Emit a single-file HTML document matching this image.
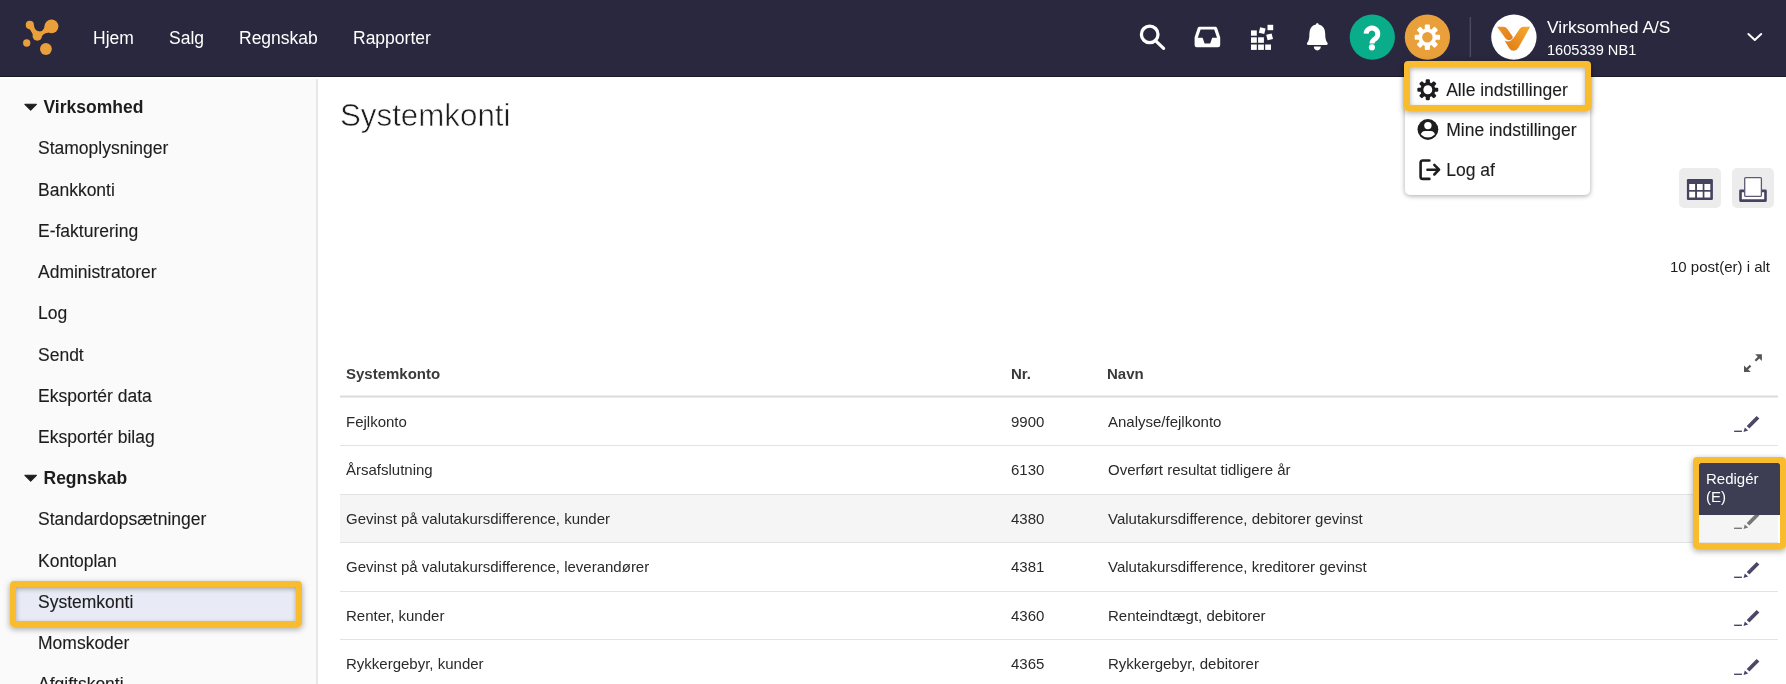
<!DOCTYPE html>
<html lang="da">
<head>
<meta charset="utf-8">
<title>Systemkonti</title>
<style>
*{box-sizing:border-box;margin:0;padding:0}
html,body{width:1786px;height:684px;overflow:hidden;background:#fff}
body{font-family:"Liberation Sans",sans-serif;color:#1d1d1f;position:relative}
.abs{position:absolute}
/* NAVBAR */
#nav{position:absolute;left:0;top:0;width:1786px;height:77px;background:#2a283e;border-bottom:1px solid #1b1930}
#nav .mi{position:absolute;top:28px;color:#fff;font-size:17.5px;line-height:20px;white-space:nowrap}
/* SIDEBAR */
#side{position:absolute;left:0;top:79px;width:318px;height:605px;background:#fafafa;border-right:2px solid #e7e7e9}
.sh{position:absolute;left:43.5px;font-weight:bold;font-size:17.5px;line-height:20px;color:#1d1d1f;white-space:nowrap}
.si{position:absolute;left:38px;-webkit-text-stroke:0.12px #1d1d1f;font-size:17.5px;line-height:20px;color:#1d1d1f;white-space:nowrap}
.tri{position:absolute;left:24px;width:0;height:0;border-left:7px solid transparent;border-right:7px solid transparent;border-top:8px solid #1d1d1f}
/* MAIN */
#title{position:absolute;left:340px;top:96px;font-size:31.3px;line-height:40px;color:#1d1d1f;white-space:nowrap;-webkit-text-stroke:0.6px #fff}
.th{position:absolute;top:365px;font-weight:bold;font-size:15px;line-height:18px;color:#3a3a3c;white-space:nowrap}
.row{position:absolute;left:340px;width:1438px;height:48.5px}
.ln{position:absolute;left:340px;width:1438px;height:1px;background:#e3e3e3}
.row span{position:absolute;top:15.7px;font-size:15px;line-height:18px;color:#2a2a2c;white-space:nowrap}
.c1{left:6px}.c2{left:671px}.c3{left:768px}

.hl{position:absolute;border:6px solid #f8bc2e;border-radius:4px;box-shadow:0 2px 6px rgba(0,0,0,.35), inset 0 2px 5px rgba(0,0,0,.30)}
#dd{position:absolute;left:1405px;top:66px;width:185px;height:129px;background:#fff;border-radius:5px;box-shadow:0 1px 5px rgba(0,0,0,.35)}
.ddt{position:absolute;left:1446.2px;-webkit-text-stroke:0.12px #1d1d1f;font-size:17.5px;line-height:20px;color:#1d1d1f;white-space:nowrap}
.btn{position:absolute;top:168px;width:42px;height:40px;background:#ececec;border-radius:5px}
#cnt{position:absolute;right:16px;top:258px;font-size:15px;line-height:18px;color:#1d1d1f;white-space:nowrap}
.ed{position:absolute;left:1394px;top:19px}
#tip{position:absolute;left:1699px;top:463px;width:81px;height:52px;background:#3d3e54;border-radius:2px 2px 0 0;color:#fff;font-size:15px;line-height:18px;padding:7px 0 0 7px}
</style>
</head>
<body>
<div id="wrap" style="position:absolute;left:0;top:0;width:1786px;height:684px;will-change:transform">
<div id="nav">
  <svg class="abs" style="left:20px;top:16px" width="44" height="44" viewBox="20 16 44 44">
    <g fill="#e9a03b" stroke="none">
      <circle cx="29.8" cy="24.9" r="4.05"/>
      <circle cx="51.5" cy="26.3" r="6.9"/>
      <circle cx="37.3" cy="35.9" r="4.75"/>
      <circle cx="26.7" cy="43" r="3.65"/>
      <circle cx="45.9" cy="49" r="5.9"/>
    </g>
    <path d="M27.1 27.7 Q31 29.5 32.6 34.3 L41.75 36.5 Q44.2 32.7 48.6 32.8 L44.9 25.5 C43.8 30.4 41.6 31.5 38.95 31.5 C36.3 31.2 34.1 29 33.9 25.1 Z" fill="#e9a03b"/>
  </svg>
  <div class="mi" style="left:93px">Hjem</div>
  <div class="mi" style="left:169px">Salg</div>
  <div class="mi" style="left:239px">Regnskab</div>
  <div class="mi" style="left:353px">Rapporter</div>

  <svg class="abs" style="left:1130px;top:0" width="656" height="77" viewBox="1130 0 656 77">
    <!-- search -->
    <circle cx="1149.7" cy="34.4" r="8.3" fill="none" stroke="#fff" stroke-width="3.3"/>
    <path d="M1156 41.2 L1163.6 48.4" stroke="#fff" stroke-width="3.2" stroke-linecap="round" fill="none"/>
    <!-- inbox -->
    <path d="M1199.6 26.8 H1215.2 Q1216.6 26.8 1217.1 28.1 L1220.2 37.2 V45 Q1220.2 47.2 1218 47.2 H1196.8 Q1194.6 47.2 1194.6 45 V37.2 L1197.7 28.1 Q1198.2 26.8 1199.6 26.8 Z M1200.6 29.6 L1197.8 37.8 H1202.6 L1204.6 43.4 H1210.2 L1212.2 37.8 H1217 L1214.2 29.6 Z" fill="#fff" fill-rule="evenodd"/>
    <!-- grid -->
    <g fill="#fff">
      <rect x="1251" y="30.4" width="5.8" height="5.3"/>
      <rect x="1251" y="37.3" width="5.8" height="5.5"/>
      <rect x="1251" y="44.5" width="5.8" height="5.4"/>
      <rect x="1258.1" y="37.3" width="5.8" height="5.5"/>
      <rect x="1258.1" y="44.5" width="5.8" height="5.4"/>
      <rect x="1265.2" y="44.5" width="5.8" height="5.4"/>
      <rect x="1267.5" y="24.8" width="5.7" height="5.4"/>
      <rect x="-2.8" y="-2.8" width="5.6" height="5.6" transform="translate(1262.2 30.6) rotate(14)"/>
      <rect x="-2.8" y="-2.8" width="5.6" height="5.6" transform="translate(1269.6 36.9) rotate(-14)"/>
    </g>
    <!-- bell -->
    <path d="M1317.3 23.1 Q1318.6 23.1 1318.7 24.6 Q1325 26 1325.2 33.5 Q1325.2 40.5 1327.3 42.6 Q1328 43.4 1327.6 44.3 Q1327.3 45 1326.4 45 H1308.2 Q1307.3 45 1307 44.3 Q1306.6 43.4 1307.3 42.6 Q1309.4 40.5 1309.4 33.5 Q1309.6 26 1315.9 24.6 Q1316 23.1 1317.3 23.1 Z" fill="#fff"/>
    <path d="M1313.8 46.6 H1320.8 Q1320.6 50.4 1317.3 50.4 Q1314 50.4 1313.8 46.6 Z" fill="#fff"/>
    <!-- help -->
    <circle cx="1372.3" cy="37.2" r="22.6" fill="#0aad8a"/>
    <path d="M1366.1 33.6 A5.85 5.85 0 1 1 1375.5 38.6 Q1372 40.6 1372 43.6" fill="none" stroke="#fff" stroke-width="5"/>
    <circle cx="1371.9" cy="47.4" r="3.05" fill="#fff"/>
    <!-- settings -->
    <circle cx="1427.4" cy="37.2" r="22.6" fill="#e9a03b"/>
    <g transform="translate(1427.35 37.25)" fill="#fff"><circle r="8.8"/><rect x="-2.60" y="-12.70" width="5.20" height="5.40" rx="1.2" transform="rotate(0)"/><rect x="-2.60" y="-12.70" width="5.20" height="5.40" rx="1.2" transform="rotate(45)"/><rect x="-2.60" y="-12.70" width="5.20" height="5.40" rx="1.2" transform="rotate(90)"/><rect x="-2.60" y="-12.70" width="5.20" height="5.40" rx="1.2" transform="rotate(135)"/><rect x="-2.60" y="-12.70" width="5.20" height="5.40" rx="1.2" transform="rotate(180)"/><rect x="-2.60" y="-12.70" width="5.20" height="5.40" rx="1.2" transform="rotate(225)"/><rect x="-2.60" y="-12.70" width="5.20" height="5.40" rx="1.2" transform="rotate(270)"/><rect x="-2.60" y="-12.70" width="5.20" height="5.40" rx="1.2" transform="rotate(315)"/><circle r="5.2" fill="#e9a03b"/></g>
    <!-- separator -->
    <rect x="1469.6" y="17" width="1.5" height="40" fill="#4b4961"/>
    <!-- avatar -->
    <circle cx="1513.9" cy="37.1" r="22.7" fill="#fff"/>
    <defs><linearGradient id="vg" x1="0" y1="1" x2="1" y2="0"><stop offset="0" stop-color="#dd7a17"/><stop offset="1" stop-color="#f9a92f"/></linearGradient>
    <linearGradient id="vg2" x1="0" y1="0" x2="1" y2="1"><stop offset="0" stop-color="#f0932a"/><stop offset="1" stop-color="#e07d1b"/></linearGradient></defs>
    <path d="M1497.1 26.8 H1503 Q1506 26.8 1507.6 29.2 L1512.6 36.6 Q1513.2 37.8 1512.2 38.8 Q1510.6 40.6 1508.6 40.2 Q1506.6 39.8 1505.4 38.2 Z" fill="url(#vg2)"/>
    <path d="M1504.6 40.5 Q1509.5 43.2 1513.4 38.3 L1519.4 29.2 Q1521 26.8 1524 26.8 H1530.2 L1518.4 47.8 Q1516.6 50.8 1513.6 50.8 Q1510.8 50.8 1509.2 48.2 Z" fill="url(#vg)"/>
    <!-- chevron -->
    <path d="M1748.4 34 L1754.8 40 L1761.2 34" stroke="#fff" stroke-width="2" fill="none" stroke-linecap="round" stroke-linejoin="round"/>
  </svg>
  <div class="abs" style="left:1547px;top:17px;color:#fff;font-size:17.4px;line-height:20px;white-space:nowrap">Virksomhed A/S</div>
  <div class="abs" style="left:1547px;top:41px;color:#fff;font-size:14.6px;line-height:18px;white-space:nowrap">1605339 NB1</div>
</div>

<div id="side"></div>
<svg class="abs" style="left:22px;top:101px" width="18" height="12" viewBox="22 101 18 12"><path d="M24.9 104.3 H36.4 L30.65 110.1 Z" fill="#1d1d1f" stroke="#1d1d1f" stroke-width="1.1" stroke-linejoin="round"/></svg><div class="sh" style="top:97px">Virksomhed</div>
<div class="si" style="top:138px">Stamoplysninger</div>
<div class="si" style="top:180px">Bankkonti</div>
<div class="si" style="top:221px">E-fakturering</div>
<div class="si" style="top:262px">Administratorer</div>
<div class="si" style="top:303px">Log</div>
<div class="si" style="top:345px">Sendt</div>
<div class="si" style="top:386px">Eksportér data</div>
<div class="si" style="top:427px">Eksportér bilag</div>
<svg class="abs" style="left:22px;top:472px" width="18" height="12" viewBox="22 101 18 12"><path d="M24.9 104.3 H36.4 L30.65 110.1 Z" fill="#1d1d1f" stroke="#1d1d1f" stroke-width="1.1" stroke-linejoin="round"/></svg><div class="sh" style="top:468px">Regnskab</div>
<div class="si" style="top:509px">Standardopsætninger</div>
<div class="si" style="top:551px">Kontoplan</div>
<div class="si" style="top:592px">Systemkonti</div>
<div class="si" style="top:633px">Momskoder</div>
<div class="si" style="top:674px">Afgiftskonti</div>

<div id="title">Systemkonti</div>

<div class="th" style="left:346px">Systemkonto</div>
<div class="th" style="left:1011px">Nr.</div>
<div class="th" style="left:1107px">Navn</div>
<div class="abs" style="left:340px;top:395px;width:1438px;height:3px;background:linear-gradient(#ececec 0 1px,#dcdcdc 1px 2px,#ececec 2px 3px)"></div>
<div class="abs" style="left:340px;top:495px;width:1438px;height:47px;background:#f5f5f5"></div>
<div class="ln" style="top:445px"></div>
<div class="ln" style="top:494px"></div>
<div class="ln" style="top:542px"></div>
<div class="ln" style="top:591px"></div>
<div class="ln" style="top:639px"></div>


<div class="row" style="top:397px"><span class="c1">Fejlkonto</span><span class="c2">9900</span><span class="c3">Analyse/fejlkonto</span></div>
<div class="row" style="top:445.5px"><span class="c1">Årsafslutning</span><span class="c2">6130</span><span class="c3">Overført resultat tidligere år</span></div>
<div class="row" style="top:494px"><span class="c1">Gevinst på valutakursdifference, kunder</span><span class="c2">4380</span><span class="c3">Valutakursdifference, debitorer gevinst</span></div>
<div class="row" style="top:542.5px"><span class="c1">Gevinst på valutakursdifference, leverandører</span><span class="c2">4381</span><span class="c3">Valutakursdifference, kreditorer gevinst</span></div>
<div class="row" style="top:591px"><span class="c1">Renter, kunder</span><span class="c2">4360</span><span class="c3">Renteindtægt, debitorer</span></div>
<div class="row" style="top:639.5px"><span class="c1">Rykkergebyr, kunder</span><span class="c2">4365</span><span class="c3">Rykkergebyr, debitorer</span></div>

<!-- dropdown -->
<div id="dd"></div>
<svg class="abs" style="left:1410px;top:70px" width="40" height="120" viewBox="1410 70 40 120">
  <g transform="translate(1427.8 89.75)" fill="#1d1d1f"><circle r="7.5"/><rect x="-2.10" y="-10.45" width="4.20" height="4.45" rx="1.1" transform="rotate(0)"/><rect x="-2.10" y="-10.45" width="4.20" height="4.45" rx="1.1" transform="rotate(45)"/><rect x="-2.10" y="-10.45" width="4.20" height="4.45" rx="1.1" transform="rotate(90)"/><rect x="-2.10" y="-10.45" width="4.20" height="4.45" rx="1.1" transform="rotate(135)"/><rect x="-2.10" y="-10.45" width="4.20" height="4.45" rx="1.1" transform="rotate(180)"/><rect x="-2.10" y="-10.45" width="4.20" height="4.45" rx="1.1" transform="rotate(225)"/><rect x="-2.10" y="-10.45" width="4.20" height="4.45" rx="1.1" transform="rotate(270)"/><rect x="-2.10" y="-10.45" width="4.20" height="4.45" rx="1.1" transform="rotate(315)"/><circle r="4.45" fill="#fff"/></g>
  <circle cx="1427.9" cy="129.5" r="10.4" fill="#1d1d1f"/>
  <circle cx="1427.9" cy="125.6" r="3.7" fill="#fff"/>
  <path d="M1420.9 134.6 Q1421.6 131 1425 131 H1430.8 Q1434.2 131 1434.9 134.6 Q1432 137.6 1427.9 137.6 Q1423.8 137.6 1420.9 134.6 Z" fill="#fff"/>
  <path d="M1429.4 160.5 H1422.8 Q1420.6 160.5 1420.6 162.7 V176.7 Q1420.6 178.9 1422.8 178.9 H1429.4" fill="none" stroke="#1d1d1f" stroke-width="2.6" stroke-linecap="round" stroke-linejoin="round"/>
  <path d="M1427.4 169.7 H1438.8 M1434.3 164.9 L1439.1 169.7 L1434.3 174.5" fill="none" stroke="#1d1d1f" stroke-width="2.5" stroke-linecap="round" stroke-linejoin="round"/>
</svg>
<div class="ddt" style="top:80px">Alle indstillinger</div>
<div class="ddt" style="top:120px">Mine indstillinger</div>
<div class="ddt" style="top:160px">Log af</div>
<div class="hl" style="left:1404px;top:61px;width:187px;height:50px"></div>

<!-- toolbar buttons -->
<div class="btn" style="left:1679px"></div>
<div class="btn" style="left:1732px"></div>
<svg class="abs" style="left:1679px;top:168px" width="100" height="40" viewBox="1679 168 100 40">
  <rect x="1686.9" y="179.1" width="26" height="20.8" rx="1.2" fill="#45435f"/>
  <g fill="#fff">
    <rect x="1689.2" y="184" width="5.9" height="6"/><rect x="1697" y="184" width="5.7" height="6"/><rect x="1704.4" y="184" width="5.9" height="6"/>
    <rect x="1689.2" y="191.7" width="5.9" height="5.8"/><rect x="1697" y="191.7" width="5.7" height="5.8"/><rect x="1704.4" y="191.7" width="5.9" height="5.8"/>
  </g>
  <rect x="1740.5" y="190.9" width="25" height="9.7" fill="#fff" stroke="#45435f" stroke-width="2.6" stroke-linejoin="round"/>
  <rect x="1744.7" y="177.6" width="16.7" height="18.8" rx="1" fill="#fff" stroke="#5d5b75" stroke-width="1.3"/>
</svg>
<div id="cnt">10 post(er) i alt</div>

<!-- expand icon -->
<svg class="abs" style="left:1740px;top:350px" width="26" height="26" viewBox="1740 350 26 26">
  <g fill="#555" stroke="#555">
    <path d="M1755.2 354.3 H1761.9 V361 Z" stroke="none"/>
    <path d="M1755.4 360.8 L1759.6 356.6" stroke-width="2.2" fill="none"/>
    <path d="M1744 365.4 V372.1 H1750.7 Z" stroke="none"/>
    <path d="M1746.3 369.8 L1750.5 365.6" stroke-width="2.2" fill="none"/>
  </g>
</svg>
<svg class="abs" style="left:1730px;top:412px;opacity:1" width="34" height="24" viewBox="1730 412 34 24">
  <rect x="1734.1" y="430.6" width="7.8" height="1.4" fill="#4a4866"/>
  <path d="M1746.7 426 L1756.6 415.9 L1759.4 418.4 L1749.4 428.5 Z" fill="#4a4866"/>
  <path d="M1744.8 427.6 L1748.2 430.4 L1743.5 432 Z" fill="#4a4866"/>
</svg>
<svg class="abs" style="left:1730px;top:509px;opacity:1" width="34" height="24" viewBox="1730 412 34 24">
  <rect x="1734.1" y="430.6" width="7.8" height="1.4" fill="#777"/>
  <path d="M1746.7 426 L1756.6 415.9 L1759.4 418.4 L1749.4 428.5 Z" fill="#777"/>
  <path d="M1744.8 427.6 L1748.2 430.4 L1743.5 432 Z" fill="#777"/>
</svg>
<svg class="abs" style="left:1730px;top:557.5px;opacity:1" width="34" height="24" viewBox="1730 412 34 24">
  <rect x="1734.1" y="430.6" width="7.8" height="1.4" fill="#4a4866"/>
  <path d="M1746.7 426 L1756.6 415.9 L1759.4 418.4 L1749.4 428.5 Z" fill="#4a4866"/>
  <path d="M1744.8 427.6 L1748.2 430.4 L1743.5 432 Z" fill="#4a4866"/>
</svg>
<svg class="abs" style="left:1730px;top:606px;opacity:1" width="34" height="24" viewBox="1730 412 34 24">
  <rect x="1734.1" y="430.6" width="7.8" height="1.4" fill="#4a4866"/>
  <path d="M1746.7 426 L1756.6 415.9 L1759.4 418.4 L1749.4 428.5 Z" fill="#4a4866"/>
  <path d="M1744.8 427.6 L1748.2 430.4 L1743.5 432 Z" fill="#4a4866"/>
</svg>
<svg class="abs" style="left:1730px;top:654.5px;opacity:1" width="34" height="24" viewBox="1730 412 34 24">
  <rect x="1734.1" y="430.6" width="7.8" height="1.4" fill="#4a4866"/>
  <path d="M1746.7 426 L1756.6 415.9 L1759.4 418.4 L1749.4 428.5 Z" fill="#4a4866"/>
  <path d="M1744.8 427.6 L1748.2 430.4 L1743.5 432 Z" fill="#4a4866"/>
</svg>

<!-- tooltip -->
<div id="tip">Redigér<br>(E)</div>
<div class="hl" style="left:1693px;top:457px;width:93px;height:92px;box-shadow:0 2px 6px rgba(0,0,0,.35)"></div>
<!-- sidebar highlight -->
<div class="abs" style="left:16px;top:587px;width:280px;height:34px;background:#e8ebf5"></div>
<div class="si" style="top:592px">Systemkonti</div>
<div class="hl" style="left:10px;top:581px;width:292px;height:46px"></div>
</div>
</body>
</html>
